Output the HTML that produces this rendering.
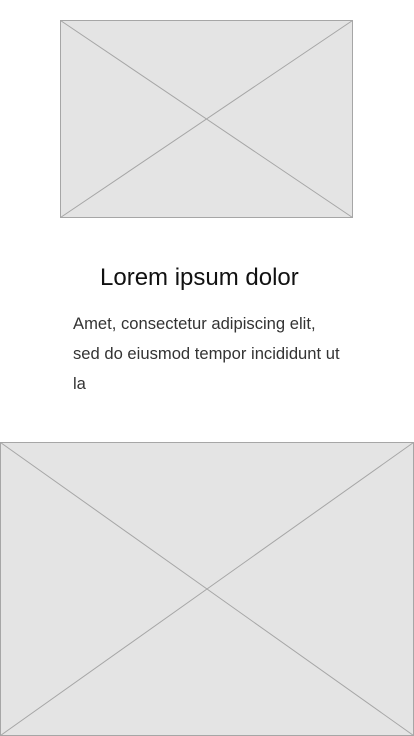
<!DOCTYPE html>
<html><head><meta charset="utf-8"><style>
html,body{margin:0;padding:0;background:#fff;width:414px;height:736px;overflow:hidden;font-family:"Liberation Sans",sans-serif}
svg{position:absolute;display:block}
.t{position:absolute;left:100px;top:263px;font-size:24px;color:#111;line-height:30px;white-space:nowrap}
.b{position:absolute;left:73px;top:309px;font-size:16.6px;color:#333;line-height:30px;white-space:nowrap}
</style></head><body>
<svg style="left:60px;top:20px" width="293" height="198"><rect x="0.5" y="0.5" width="292" height="197" fill="#e4e4e4" stroke="#a6a6a6"/><path d="M0.5 0.5L292.5 197.5M292.5 0.5L0.5 197.5" stroke="#a6a6a6" stroke-width="1"/></svg>
<div class="t">Lorem ipsum dolor</div>
<div class="b">Amet, consectetur adipiscing elit,<br>sed do eiusmod tempor incididunt ut<br>la</div>
<svg style="left:0;top:442px" width="414" height="294"><rect x="0.5" y="0.5" width="413" height="293" fill="#e4e4e4" stroke="#a6a6a6"/><path d="M0.5 0.5L413.5 293.5M413.5 0.5L0.5 293.5" stroke="#a6a6a6" stroke-width="1"/></svg>
</body></html>
